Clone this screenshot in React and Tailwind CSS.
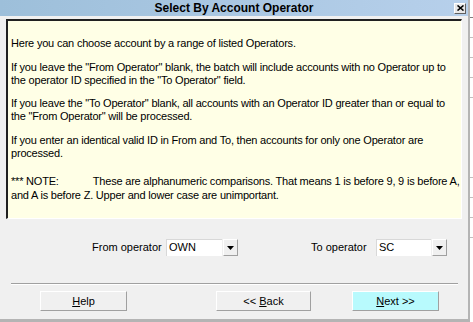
export default function App() {
    const font = { fontFamily: '"Liberation Sans", Arial, sans-serif' };

    const Btn = ({ children, cyan, w }) => (
        <div
            className={`${w} h-[20px] flex items-center justify-center text-[11px] text-black border border-t-white border-l-white border-r-[#a0a0a0] border-b-[#a0a0a0] ${cyan ? 'bg-[#b8fafd]' : 'bg-[#f0f0f0]'}`}
        >
            {children}
        </div>
    );

    const Combo = ({ value, w }) => (
        <div className={`flex h-[17px] ${w}`}>
            <div className="flex-1 bg-white border-t border-l border-[#d8d8d8] pl-[2px] text-[11px] leading-[15px] text-black">{value}</div>
            <div className="w-[15px] ml-[1px] flex items-center justify-center bg-[#f0f0f0] border border-t-white border-l-white border-r-[#a0a0a0] border-b-[#a0a0a0]">
                <svg width="7" height="4" viewBox="0 0 7 4"><path d="M0 0h7L3.5 4z" fill="#000" /></svg>
            </div>
        </div>
    );

    const note = "*** NOTE:            These are alphanumeric comparisons. That means 1 is before 9, 9 is before A, and A is before Z. Upper and lower case are unimportant.";

    return (
        <div className="w-[473px] h-[322px] flex bg-white overflow-hidden" style={font}>
            <div className="w-[470px] h-full flex flex-col bg-[#f0f0f0] border-r-2 border-b-[3px] border-[#b4b4b4]">
                {/* title bar */}
                <div className="h-[16px] grid grid-cols-[1fr_auto_1fr] items-center bg-gradient-to-r from-[#9dbfda] to-[#b7d0eb]">
                    <div />
                    <div className="text-[12px] font-bold text-black leading-none">Select By Account Operator</div>
                    <div className="flex justify-end pr-[2px]">
                        <div className="w-[12px] h-[11px] flex items-center justify-center bg-[#e8e8e8] border border-t-white border-l-white border-r-[#606060] border-b-[#606060]">
                            <svg width="7" height="6" viewBox="0 0 7 6"><path d="M0.5 0.5l6 5M6.5 0.5l-6 5" stroke="#000" strokeWidth="1.6" /></svg>
                        </div>
                    </div>
                </div>

                {/* info panel */}
                <div className="mt-[3px] ml-[6px] mr-[6px] h-[200px] bg-[#ffffe6] border-t-2 border-l-2 border-t-[#202020] border-l-[#202020] border-r border-b border-r-white border-b-white pl-[3px] pr-0 pt-[16px] text-[11px] leading-[13px] tracking-[-0.2px] text-black">
                    <p className="mb-[11px]">Here you can choose account by a range of listed Operators.</p>
                    <p className="mb-[10px]">If you leave the "From Operator" blank, the batch will include accounts with no Operator up to the operator ID specified in the "To Operator" field.</p>
                    <p className="mb-[11px]">If you leave the "To Operator" blank, all accounts with an Operator ID greater than or equal to the "From Operator" will be processed.</p>
                    <p className="mb-[14px]">If you enter an identical valid ID in From and To, then accounts for only one Operator are processed.</p>
                    <p className="leading-[14px] whitespace-pre-wrap">{note}</p>
                </div>

                {/* operator selection */}
                <div className="mt-[20px] flex items-center text-[11px] text-black">
                    <span className="ml-[92px] w-[74px]">From operator</span>
                    <Combo value="OWN" w="w-[72px]" />
                    <span className="ml-[73px] w-[65px]">To operator</span>
                    <Combo value="SC" w="w-[71px]" />
                </div>

                {/* separator */}
                <div className="mt-[27px] ml-[11px] w-[447px] border-t border-t-[#a0a0a0] border-b border-b-white" />

                {/* buttons */}
                <div className="mt-[6px] flex">
                    <div className="ml-[40px]"><Btn w="w-[87px]"><span><u>H</u>elp</span></Btn></div>
                    <div className="ml-[89px]"><Btn w="w-[95px]"><span>&lt;&lt; <u>B</u>ack</span></Btn></div>
                    <div className="ml-[41px]"><Btn w="w-[87px]" cyan><span><u>N</u>ext &gt;&gt;</span></Btn></div>
                </div>
            </div>

            {/* sliver of the window behind */}
            <div className="flex-1 flex flex-col bg-white">
                <div className="h-[18px] border-b border-[#808080]" />
                <div className="h-[20px] border-b border-[#c0c0c0]" />
                <div className="h-[20px] border-b border-[#c0c0c0]" />
                <div className="h-[20px] border-b border-[#c0c0c0]" />
                <div className="h-[20px] border-b border-[#c0c0c0]" />
                <div className="h-[80px] border-b border-[#c0c0c0]" />
                <div className="h-[20px] border-b border-[#c0c0c0]" />
                <div className="h-[20px] border-b border-[#c0c0c0]" />
                <div className="h-[20px] border-b border-[#c0c0c0]" />
            </div>
        </div>
    );
}
